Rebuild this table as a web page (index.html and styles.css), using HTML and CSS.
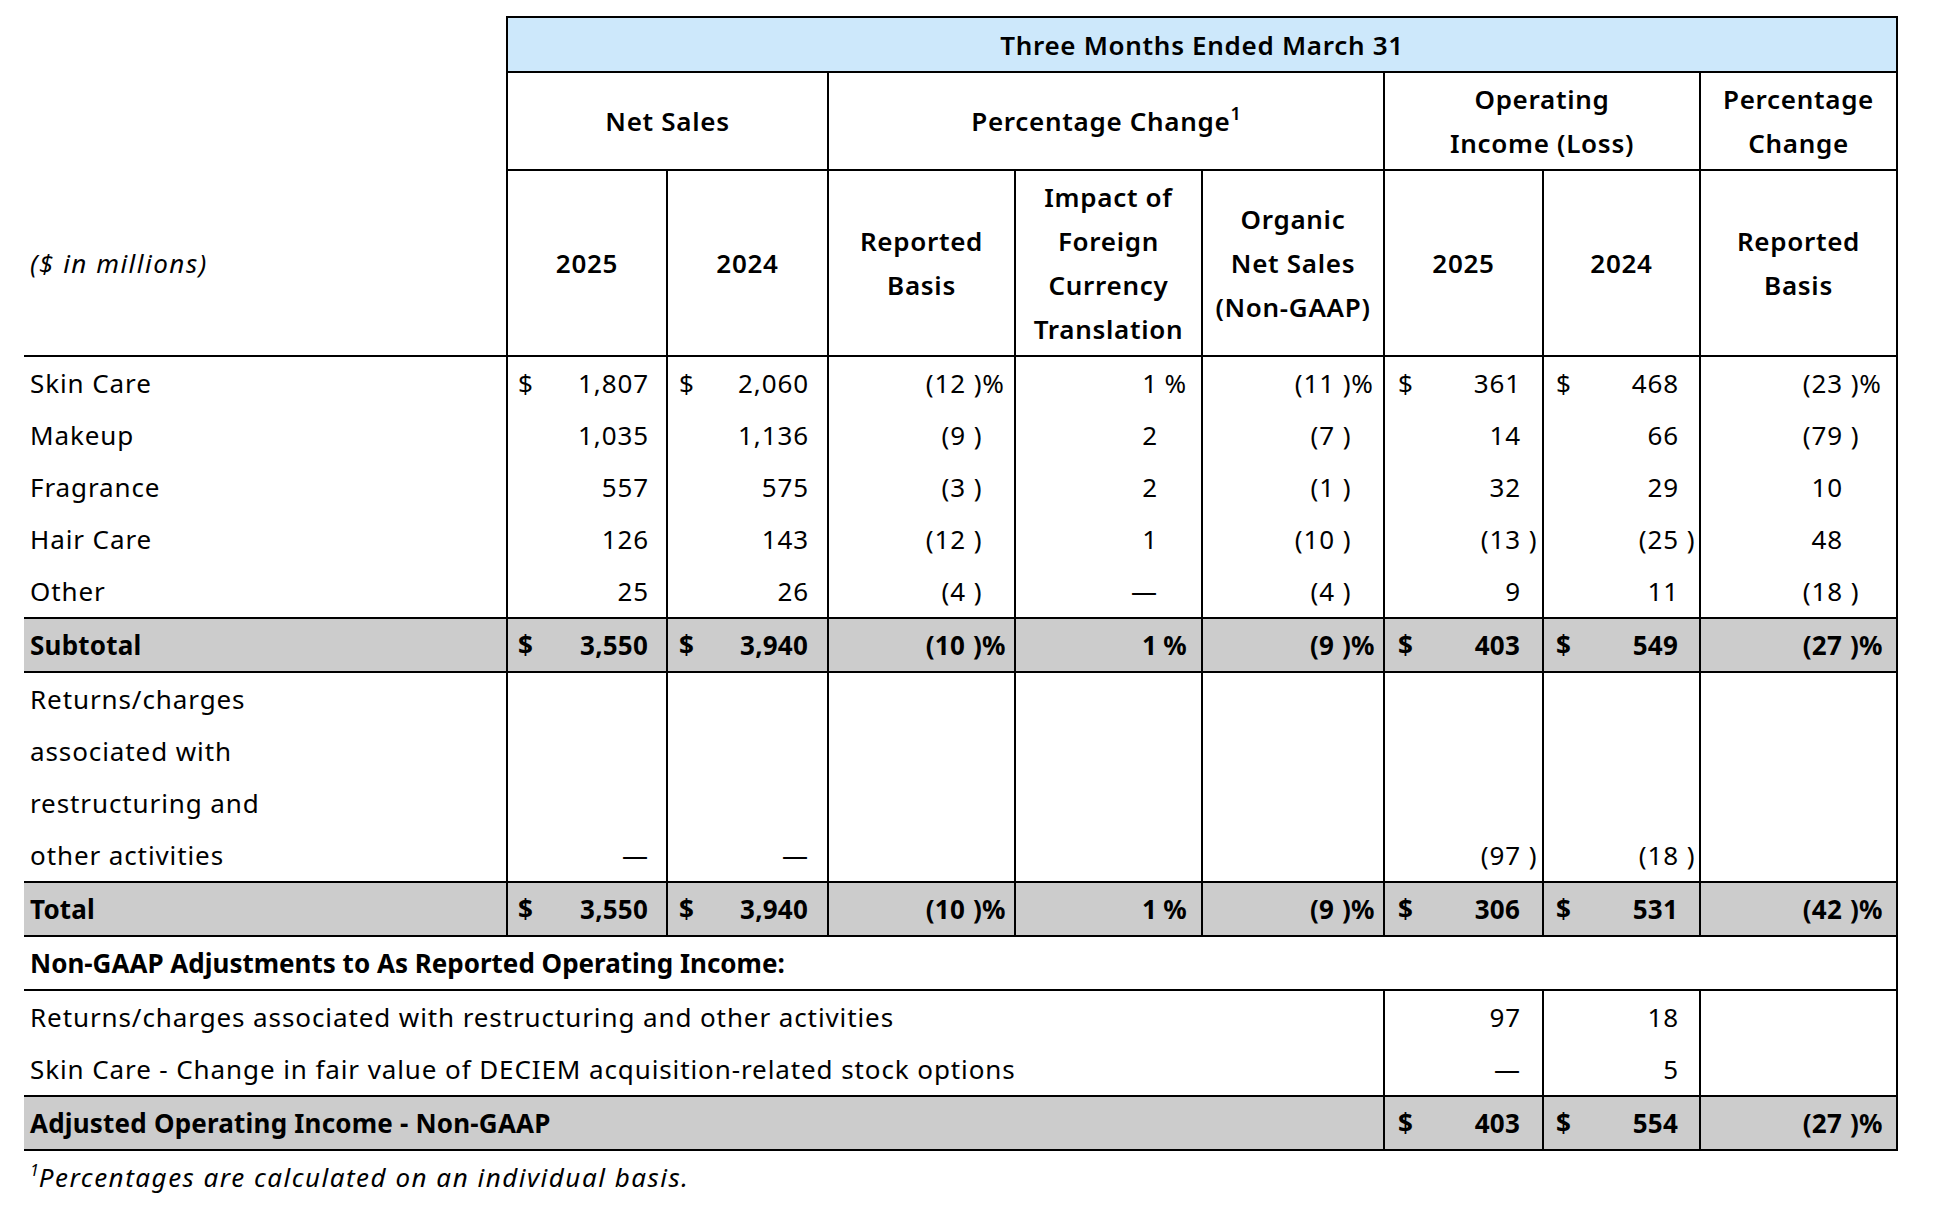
FILE: index.html
```html
<!DOCTYPE html>
<html>
<head>
<meta charset="utf-8">
<link rel="stylesheet" href="styles.css">
</head>
<body>
<div class="page">
<table class="fin">
  <colgroup>
    <col class="w-label">
    <col class="w-ns1"><col class="w-ns2">
    <col class="w-pr"><col class="w-fx"><col class="w-org">
    <col class="w-oi1"><col class="w-oi2">
    <col class="w-pc">
  </colgroup>
  <thead>
    <tr class="h1">
      <th class="blank"></th>
      <th class="title" colspan="8">Three Months Ended March 31</th>
    </tr>
    <tr class="h2">
      <th class="blank"></th>
      <th colspan="2">Net Sales</th>
      <th colspan="3">Percentage Change<sup>1</sup></th>
      <th colspan="2">Operating<br>Income (Loss)</th>
      <th>Percentage<br>Change</th>
    </tr>
    <tr class="h3">
      <th class="lbl-head">($ in millions)</th>
      <th>2025</th>
      <th>2024</th>
      <th>Reported<br>Basis</th>
      <th>Impact of<br>Foreign<br>Currency<br>Translation</th>
      <th>Organic<br>Net Sales<br>(Non-GAAP)</th>
      <th>2025</th>
      <th>2024</th>
      <th>Reported<br>Basis</th>
    </tr>
  </thead>
  <tbody>
    <tr class="r">
      <td class="lbl">Skin Care</td>
      <td class="d ns1"><div class="c"><span class="cur">$</span><span class="v">1,807</span></div></td>
      <td class="d ns2"><div class="c"><span class="cur">$</span><span class="v">2,060</span></div></td>
      <td class="d pr"><div class="c"><span class="v">(12</span><span class="sx"> )%</span></div></td>
      <td class="d fx"><div class="c"><span class="v">1</span><span class="sx">%</span></div></td>
      <td class="d org"><div class="c"><span class="v">(11</span><span class="sx"> )%</span></div></td>
      <td class="d oi1"><div class="c"><span class="cur">$</span><span class="v">361</span><span class="sx"></span></div></td>
      <td class="d oi2"><div class="c"><span class="cur">$</span><span class="v">468</span><span class="sx"></span></div></td>
      <td class="d pc"><div class="c"><span class="v">(23</span><span class="sx"> )%</span></div></td>
    </tr>
    <tr class="r">
      <td class="lbl">Makeup</td>
      <td class="d ns1"><div class="c"><span class="v">1,035</span></div></td>
      <td class="d ns2"><div class="c"><span class="v">1,136</span></div></td>
      <td class="d pr"><div class="c"><span class="v">(9</span><span class="sx"> )</span></div></td>
      <td class="d fx"><div class="c"><span class="v">2</span><span class="sx"></span></div></td>
      <td class="d org"><div class="c"><span class="v">(7</span><span class="sx"> )</span></div></td>
      <td class="d oi1"><div class="c"><span class="v">14</span><span class="sx"></span></div></td>
      <td class="d oi2"><div class="c"><span class="v">66</span><span class="sx"></span></div></td>
      <td class="d pc"><div class="c"><span class="v">(79</span><span class="sx"> )</span></div></td>
    </tr>
    <tr class="r">
      <td class="lbl">Fragrance</td>
      <td class="d ns1"><div class="c"><span class="v">557</span></div></td>
      <td class="d ns2"><div class="c"><span class="v">575</span></div></td>
      <td class="d pr"><div class="c"><span class="v">(3</span><span class="sx"> )</span></div></td>
      <td class="d fx"><div class="c"><span class="v">2</span><span class="sx"></span></div></td>
      <td class="d org"><div class="c"><span class="v">(1</span><span class="sx"> )</span></div></td>
      <td class="d oi1"><div class="c"><span class="v">32</span><span class="sx"></span></div></td>
      <td class="d oi2"><div class="c"><span class="v">29</span><span class="sx"></span></div></td>
      <td class="d pc"><div class="c"><span class="v">10</span><span class="sx"></span></div></td>
    </tr>
    <tr class="r">
      <td class="lbl">Hair Care</td>
      <td class="d ns1"><div class="c"><span class="v">126</span></div></td>
      <td class="d ns2"><div class="c"><span class="v">143</span></div></td>
      <td class="d pr"><div class="c"><span class="v">(12</span><span class="sx"> )</span></div></td>
      <td class="d fx"><div class="c"><span class="v">1</span><span class="sx"></span></div></td>
      <td class="d org"><div class="c"><span class="v">(10</span><span class="sx"> )</span></div></td>
      <td class="d oi1"><div class="c"><span class="v">(13</span><span class="sx"> )</span></div></td>
      <td class="d oi2"><div class="c"><span class="v">(25</span><span class="sx"> )</span></div></td>
      <td class="d pc"><div class="c"><span class="v">48</span><span class="sx"></span></div></td>
    </tr>
    <tr class="r">
      <td class="lbl">Other</td>
      <td class="d ns1"><div class="c"><span class="v">25</span></div></td>
      <td class="d ns2"><div class="c"><span class="v">26</span></div></td>
      <td class="d pr"><div class="c"><span class="v">(4</span><span class="sx"> )</span></div></td>
      <td class="d fx"><div class="c"><span class="v">—</span><span class="sx"></span></div></td>
      <td class="d org"><div class="c"><span class="v">(4</span><span class="sx"> )</span></div></td>
      <td class="d oi1"><div class="c"><span class="v">9</span><span class="sx"></span></div></td>
      <td class="d oi2"><div class="c"><span class="v">11</span><span class="sx"></span></div></td>
      <td class="d pc"><div class="c"><span class="v">(18</span><span class="sx"> )</span></div></td>
    </tr>
    <tr class="r tot">
      <td class="lbl">Subtotal</td>
      <td class="d ns1"><div class="c"><span class="cur">$</span><span class="v">3,550</span></div></td>
      <td class="d ns2"><div class="c"><span class="cur">$</span><span class="v">3,940</span></div></td>
      <td class="d pr"><div class="c"><span class="v">(10</span><span class="sx"> )%</span></div></td>
      <td class="d fx"><div class="c"><span class="v">1</span><span class="sx">%</span></div></td>
      <td class="d org"><div class="c"><span class="v">(9</span><span class="sx"> )%</span></div></td>
      <td class="d oi1"><div class="c"><span class="cur">$</span><span class="v">403</span><span class="sx"></span></div></td>
      <td class="d oi2"><div class="c"><span class="cur">$</span><span class="v">549</span><span class="sx"></span></div></td>
      <td class="d pc"><div class="c"><span class="v">(27</span><span class="sx"> )%</span></div></td>
    </tr>
    <tr class="r multi">
      <td class="lbl">Returns/charges<br>associated with<br>restructuring and<br>other activities</td>
      <td class="d ns1"><div class="c"><span class="v">—</span></div></td>
      <td class="d ns2"><div class="c"><span class="v">—</span></div></td>
      <td class="d pr"></td>
      <td class="d fx"></td>
      <td class="d org"></td>
      <td class="d oi1"><div class="c"><span class="v">(97</span><span class="sx"> )</span></div></td>
      <td class="d oi2"><div class="c"><span class="v">(18</span><span class="sx"> )</span></div></td>
      <td class="d pc"></td>
    </tr>
    <tr class="r tot">
      <td class="lbl">Total</td>
      <td class="d ns1"><div class="c"><span class="cur">$</span><span class="v">3,550</span></div></td>
      <td class="d ns2"><div class="c"><span class="cur">$</span><span class="v">3,940</span></div></td>
      <td class="d pr"><div class="c"><span class="v">(10</span><span class="sx"> )%</span></div></td>
      <td class="d fx"><div class="c"><span class="v">1</span><span class="sx">%</span></div></td>
      <td class="d org"><div class="c"><span class="v">(9</span><span class="sx"> )%</span></div></td>
      <td class="d oi1"><div class="c"><span class="cur">$</span><span class="v">306</span><span class="sx"></span></div></td>
      <td class="d oi2"><div class="c"><span class="cur">$</span><span class="v">531</span><span class="sx"></span></div></td>
      <td class="d pc"><div class="c"><span class="v">(42</span><span class="sx"> )%</span></div></td>
    </tr>
    <tr class="r sect">
      <td class="lbl" colspan="9">Non-GAAP Adjustments to As Reported Operating Income:</td>
    </tr>
    <tr class="r adj">
      <td class="lbl" colspan="6">Returns/charges associated with restructuring and other activities</td>
      <td class="d oi1"><div class="c"><span class="v">97</span><span class="sx"></span></div></td>
      <td class="d oi2"><div class="c"><span class="v">18</span><span class="sx"></span></div></td>
      <td class="d pc"></td>
    </tr>
    <tr class="r adj">
      <td class="lbl" colspan="6">Skin Care - Change in fair value of DECIEM acquisition-related stock options</td>
      <td class="d oi1"><div class="c"><span class="v">—</span><span class="sx"></span></div></td>
      <td class="d oi2"><div class="c"><span class="v">5</span><span class="sx"></span></div></td>
      <td class="d pc"></td>
    </tr>
    <tr class="r tot">
      <td class="lbl" colspan="6">Adjusted Operating Income - Non-GAAP</td>
      <td class="d oi1"><div class="c"><span class="cur">$</span><span class="v">403</span><span class="sx"></span></div></td>
      <td class="d oi2"><div class="c"><span class="cur">$</span><span class="v">554</span><span class="sx"></span></div></td>
      <td class="d pc"><div class="c"><span class="v">(27</span><span class="sx"> )%</span></div></td>
    </tr>
  </tbody>
</table>
<p class="note"><sup>1</sup>Percentages are calculated on an individual basis.</p>
</div>
</body>
</html>
```

FILE: styles.css
```css
html, body {
  margin: 0;
  padding: 0;
  background: #ffffff;
}

body {
  font-family: "Noto Sans", "Open Sans", sans-serif;
  font-size: 26px;
  color: #000;
  letter-spacing: 0.9px;
}

.page {
  padding: 16px 0 0 24px;
}

.fin {
  border-collapse: collapse;
  table-layout: fixed;
  width: 1873px;
}

.w-label { width: 483px; }
.w-ns1 { width: 160px; }
.w-ns2 { width: 161px; }
.w-pr { width: 187px; }
.w-fx { width: 187px; }
.w-org { width: 182px; }
.w-oi1 { width: 159px; }
.w-oi2 { width: 157px; }
.w-pc { width: 197px; }

th {
  font-weight: 600;
  letter-spacing: 0.7px;
  text-align: center;
  vertical-align: middle;
  border: 2px solid #000;
  line-height: 44px;
  padding: 0 4px;
}

th.blank {
  border-top: none;
  border-left: none;
  border-bottom: none;
}

th sup {
  font-size: 18px;
  line-height: 0;
  vertical-align: 11px;
  letter-spacing: 0;
}

.h1 { height: 55px; }
.h1 th.title {
  background: #cde8fb;
}
.h2 { height: 98px; }
.h3 { height: 186px; }

th.lbl-head {
  border-left: none;
  border-top: none;
  font-style: italic;
  font-weight: 400;
  letter-spacing: 1.5px;
  text-align: left;
  padding-left: 6px;
}

td {
  padding: 0;
  line-height: 52px;
  vertical-align: middle;
  white-space: nowrap;
}

td.lbl {
  padding-left: 6px;
  text-align: left;
}

td.d {
  border-left: 2px solid #000;
  border-right: 2px solid #000;
}

.c {
  display: flex;
  align-items: baseline;
}

.cur {
  flex: none;
}

.v {
  flex: 1;
  text-align: right;
}

.sx {
  flex: none;
  white-space: pre;
  text-align: left;
}

.ns1 { padding-left: 10px; padding-right: 17px; }
.ns2 { padding-left: 11px; padding-right: 18px; }
.pr { padding-right: 7px; }
.pr .sx { width: 41px; }
.fx { padding-right: 14px; }
.fx .sx { width: 29px; text-align: right; }
.org { padding-right: 3px; }
.org .sx { width: 45px; }
.oi1 { padding-left: 13px; padding-right: 4px; }
.oi1 .sx { width: 17px; }
.oi2 { padding-left: 12px; padding-right: 3px; }
.oi2 .sx { width: 17px; }
.pc { padding-right: 14px; }
.pc .sx { width: 39px; }

tr.tot td {
  background: #cccccc;
  font-weight: 700;
  letter-spacing: 0.2px;
  border-top: 2px solid #000;
  border-bottom: 2px solid #000;
}

tr.tot td.d .v {
  padding-right: 1px;
}

tr.multi td {
  vertical-align: bottom;
}

tr.sect td {
  font-weight: 700;
  letter-spacing: 0;
  border-right: 2px solid #000;
  border-bottom: 2px solid #000;
  height: 51px;
}

.note {
  margin: 6px 0 0 0;
  padding-left: 6px;
  font-style: italic;
  letter-spacing: 1.5px;
  line-height: 40px;
}

.note sup {
  font-size: 16px;
  line-height: 0;
  vertical-align: 11px;
  letter-spacing: 0;
}
```
